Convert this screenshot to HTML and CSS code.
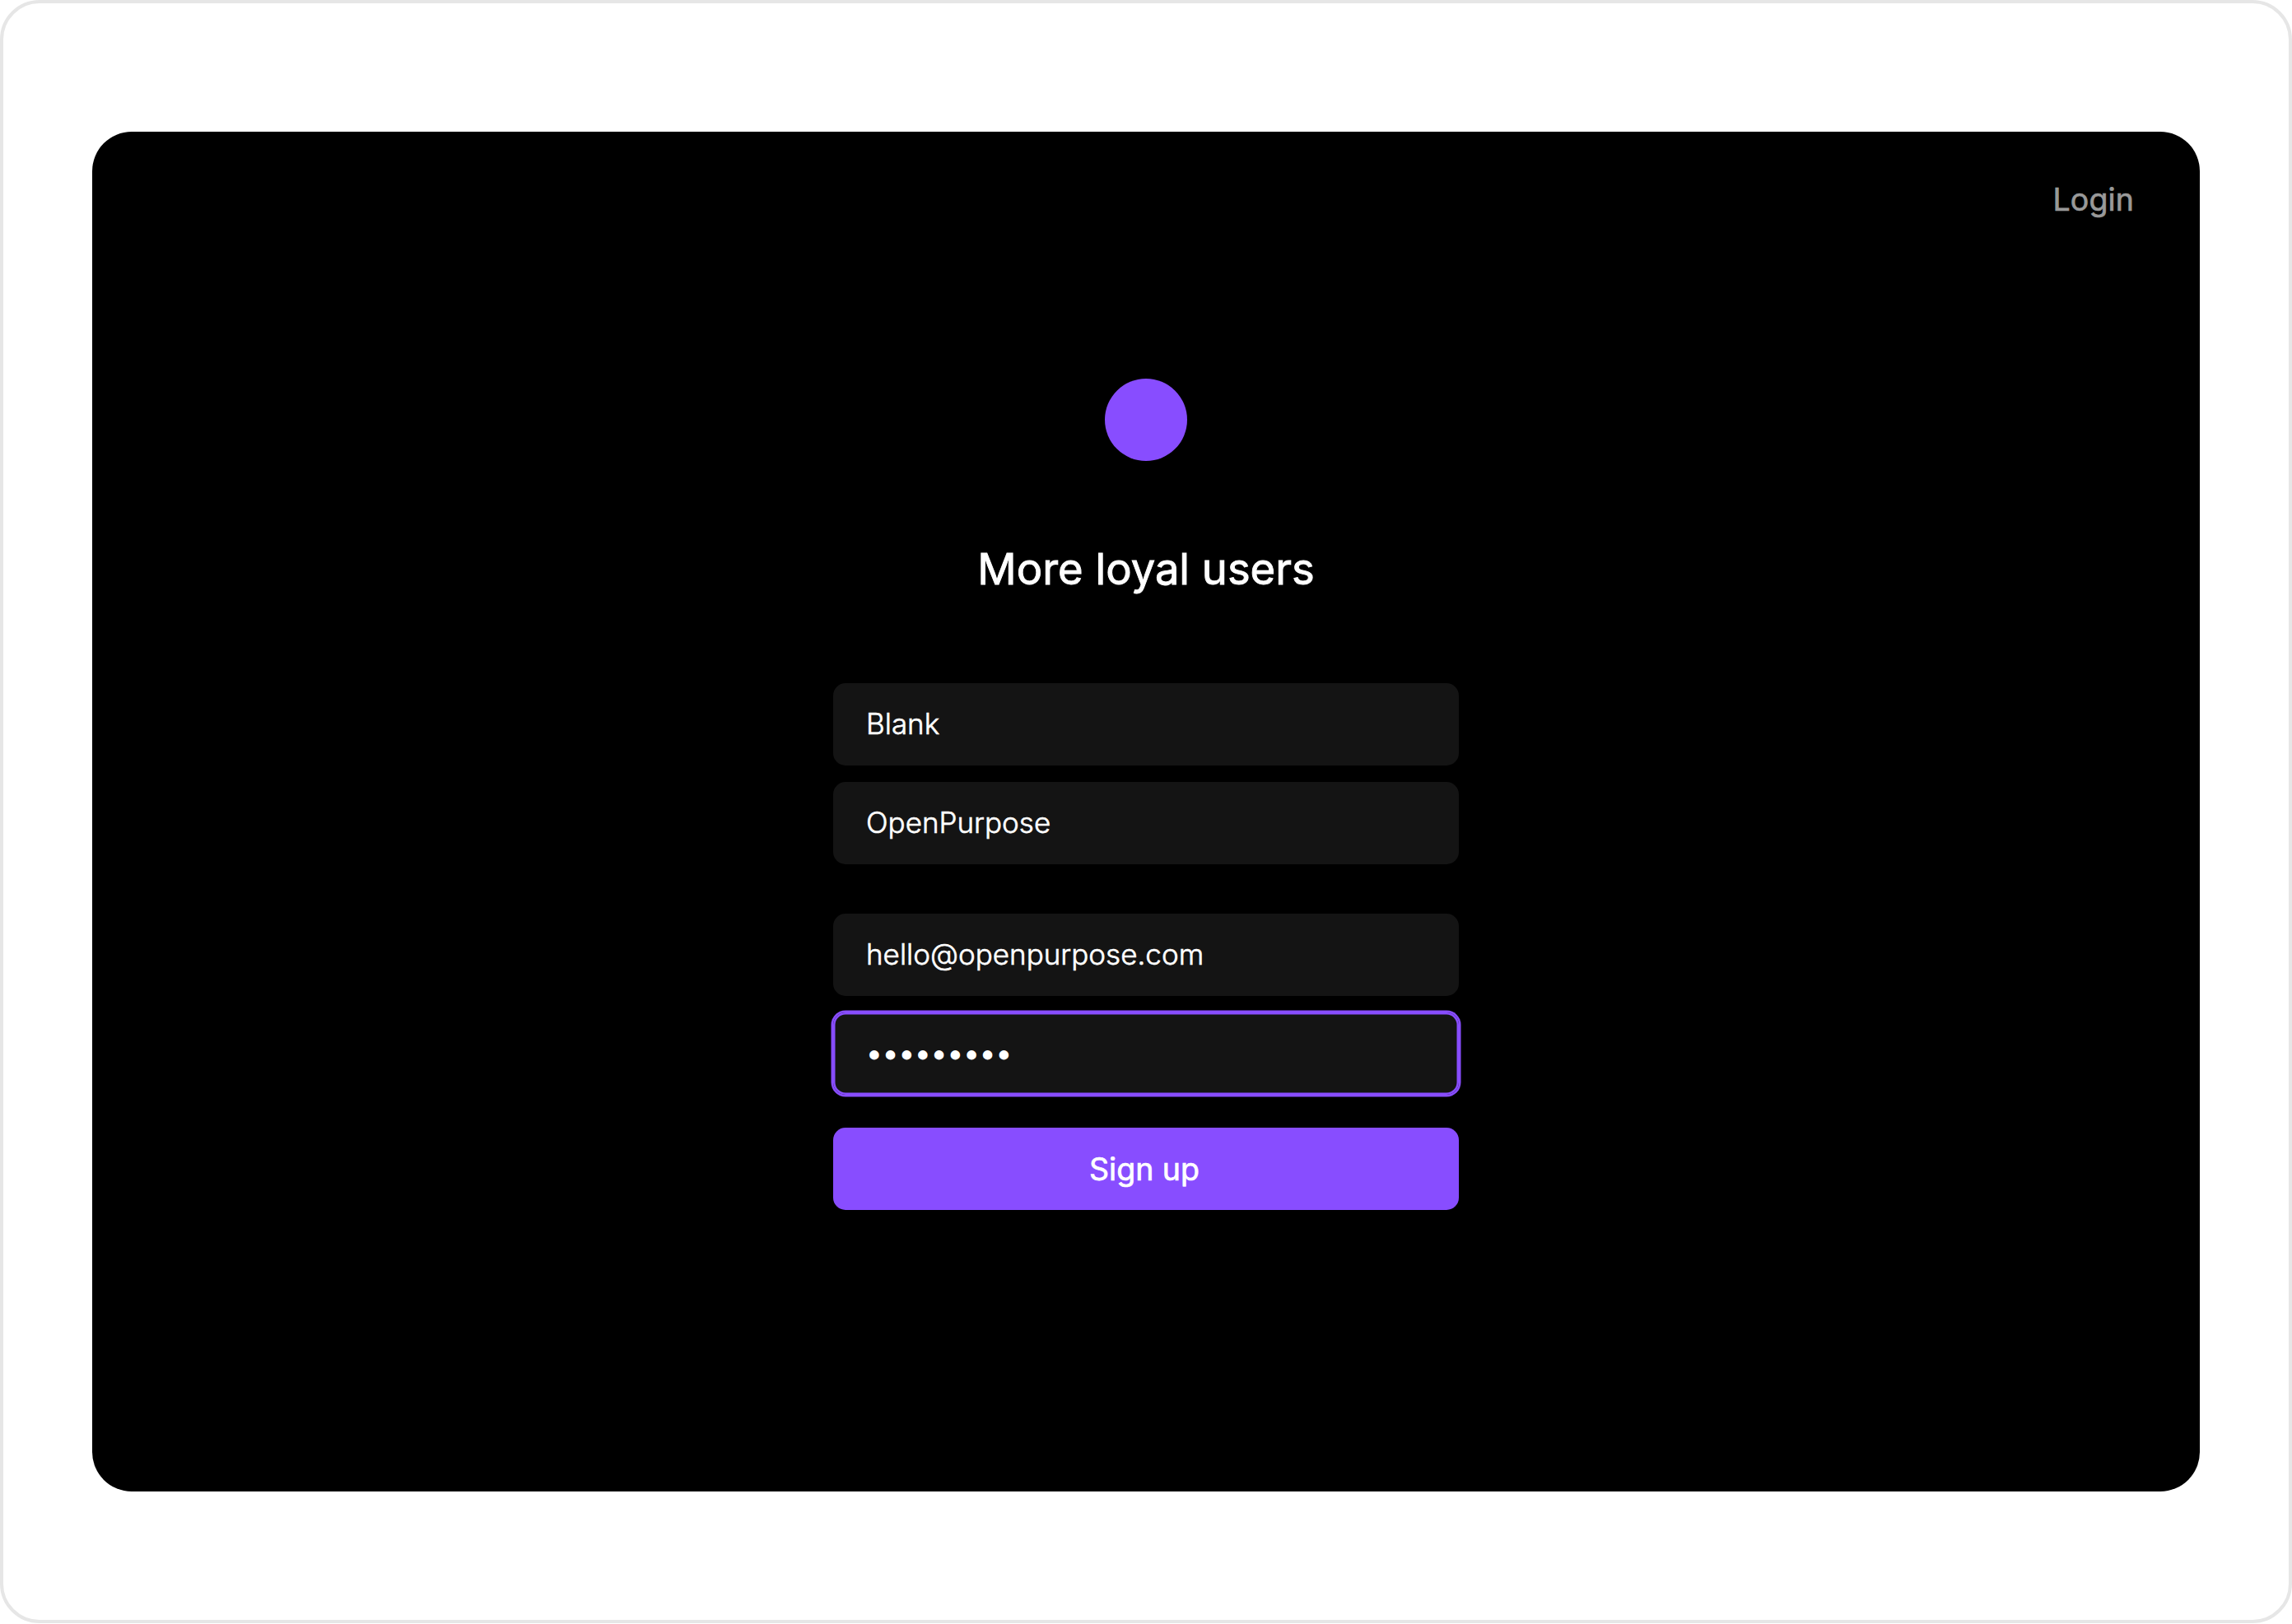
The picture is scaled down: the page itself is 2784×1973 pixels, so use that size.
FILE: index.html
```html
<!DOCTYPE html>
<html lang="en">
<head>
<meta charset="utf-8">
<title>Sign up</title>
<link rel="stylesheet" href="styles.css">
</head>
<body>
<div class="frame">
  <div class="screen">
    <header class="topbar">
      <a class="login" href="#">Login</a>
    </header>
    <main class="signup">
      <div class="logo"></div>
      <h1>More loyal users</h1>
      <form class="form">
        <div class="group">
          <input class="field" type="text" value="Blank">
          <input class="field" type="text" value="OpenPurpose">
        </div>
        <div class="group">
          <input class="field" type="text" value="hello@openpurpose.com">
          <input class="field active password" type="password" value="password1">
        </div>
        <button class="submit" type="button">Sign up</button>
      </form>
    </main>
  </div>
</div>
</body>
</html>
```

FILE: styles.css
```css
* { box-sizing: border-box; }
body { margin: 0; background: #fff; font-family: Inter, "Liberation Sans", sans-serif; }

.frame { height: 1972px; padding: 156px 108px; border: 4px solid #e6e6e6; border-radius: 48px; }
.screen { height: 1652.4px; background: #000; border-radius: 48px; color: #fff; }

.topbar { display: flex; justify-content: flex-end; height: 300px; padding: 60px 80px 0 0; }
.login { font-size: 37.5px; line-height: 45px; font-weight: 400; letter-spacing: 0.1px; color: #999; text-decoration: none; -webkit-text-stroke: 0.7px #999; }

.signup { display: flex; flex-direction: column; align-items: center; }
.logo { width: 100px; height: 100px; border-radius: 50%; background: #884dff; }
h1 { margin: 96px 0 104px; font-size: 52.5px; line-height: 70px; font-weight: 400; -webkit-text-stroke: 0.9px #fff; }

.form { display: flex; flex-direction: column; width: 760px; }
.group { display: flex; flex-direction: column; gap: 20px; margin-bottom: 60px; }
.group:last-of-type { margin-bottom: 40px; }
.field { width: 100%; height: 100px; padding: 0 40px 3px; border: 0; border-radius: 15px; outline: 0; background: #141414; color: #fff; font-family: inherit; font-size: 35px; font-weight: 300; -webkit-text-stroke: 0.6px #fff; }
.password { -webkit-text-stroke-width: 2px; }
.active { box-shadow: 0 0 0 2.5px #884dff, inset 0 0 0 2.5px #884dff; }
.submit { height: 100px; padding: 0 4px 0 0; border: 0; border-radius: 15px; background: #884dff; color: #fff; font-family: inherit; font-size: 37.5px; font-weight: 400; -webkit-text-stroke: 0.7px #fff; }
```
